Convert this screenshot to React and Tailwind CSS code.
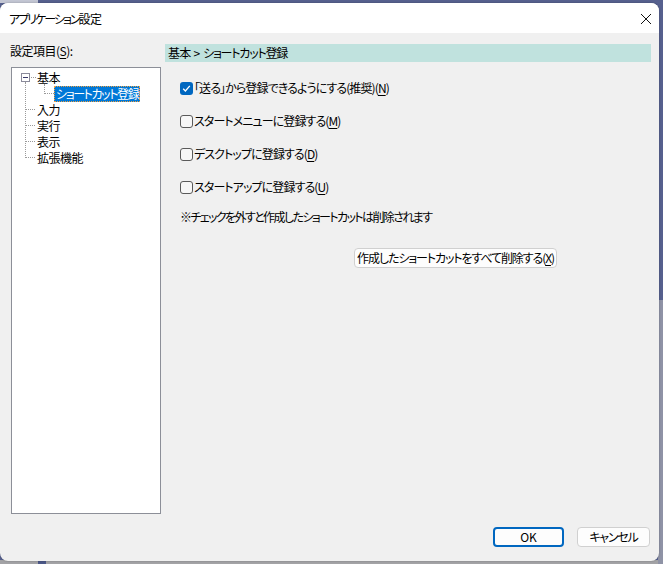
import React from "react";

function U({ children }) {
  return <span className="underline underline-offset-2">{children}</span>;
}

function Checkbox({ checked }) {
  if (checked) {
    return (
      <span className="w-[13px] h-[13px] rounded-[3px] bg-[#0067c0] flex items-center justify-center shrink-0">
        <svg width="9" height="9" viewBox="0 0 9 9">
          <path d="M1.2 4.8 L3.4 7 L7.8 1.8" fill="none" stroke="white" strokeWidth="1.3" />
        </svg>
      </span>
    );
  }
  return <span className="w-[13px] h-[13px] rounded-[3px] border border-[#5a5a5a] bg-[#f7f7f7] shrink-0" />;
}

function Row({ checked, children }) {
  return (
    <div className="flex items-center h-[16px] gap-[1px]">
      <Checkbox checked={checked} />
      <span className="leading-[16px] whitespace-nowrap tracking-[-0.9px]">{children}</span>
    </div>
  );
}

export default function App() {
  return (
    <div className="relative w-[663px] h-[564px] bg-[#56608e] overflow-hidden text-[12px] text-black font-['Noto_Sans_CJK_JP','Noto_Sans',sans-serif] [font-feature-settings:'palt'_1]">
      <div className="absolute left-0 top-0 w-[38px] h-[3px] bg-[#c3c6d3]" />
      <div className="absolute left-0 bottom-0 w-[663px] h-[4px] bg-[#a3a3a6]" />
      <div className="absolute left-[38px] bottom-0 w-[8px] h-[4px] bg-[#4b5787]" />
      <div className="absolute right-0 top-[300px] w-[5px] h-[264px] bg-[#8f93a6]" />

      <div className="relative mt-[3px] w-[659px] h-[558px] rounded-[8px] bg-[#f0f0f0] overflow-hidden flex flex-col shadow-[0_0_2px_rgba(0,0,0,0.3)]">
        {/* title bar */}
        <div className="h-[30px] bg-white flex items-center justify-between pl-[9px] pr-[6px]">
          <span className="leading-[16px] pt-[1px] whitespace-nowrap">
            <span className="tracking-[-2px]">アプリケーション</span>
            <span className="tracking-[-0.5px]">設定</span>
          </span>
          <svg width="12" height="12" viewBox="0 0 12 12" className="mr-[1px] mt-[1px]">
            <path d="M1 1 L11 11 M11 1 L1 11" stroke="#111" strokeWidth="1" />
          </svg>
        </div>

        {/* body */}
        <div className="flex flex-1">
          {/* left column */}
          <div className="flex flex-col pt-[10px]">
            <div className="pl-[10px] leading-[16px] h-[16px] tracking-[-0.5px]">
              設定項目(<U>S</U>):
            </div>
            <div className="ml-[11px] mt-[8px] w-[150px] h-[447px] bg-white border border-[#8c8f98] relative">
              {/* tree lines */}
              <div className="absolute left-[13px] top-[14px] h-[76px] border-l border-dotted border-[#9a9a9a]" />
              <div className="absolute left-[13px] top-[41px] w-[10px] border-t border-dotted border-[#9a9a9a]" />
              <div className="absolute left-[13px] top-[57px] w-[10px] border-t border-dotted border-[#9a9a9a]" />
              <div className="absolute left-[13px] top-[73px] w-[10px] border-t border-dotted border-[#9a9a9a]" />
              <div className="absolute left-[13px] top-[89px] w-[10px] border-t border-dotted border-[#9a9a9a]" />
              <div className="absolute left-[19px] top-[9px] w-[5px] border-t border-dotted border-[#9a9a9a]" />
              <div className="absolute left-[32px] top-[16px] h-[10px] border-l border-dotted border-[#9a9a9a]" />
              <div className="absolute left-[32px] top-[25px] w-[10px] border-t border-dotted border-[#9a9a9a]" />
              <div className="absolute left-[9px] top-[5px] w-[9px] h-[9px] border border-[#8a8a9a] bg-white flex items-center justify-center">
                <span className="w-[5px] h-[1px] bg-[#3a3a6a]" />
              </div>
              <div className="flex flex-col pt-[2px] tracking-[-0.5px]">
                <div className="h-[16px] leading-[16px] pl-[25px]">基本</div>
                <div className="h-[16px] flex pl-[42px]">
                  <span className="h-[16px] leading-[14px] px-[1px] bg-[#0078d7] text-white border border-dotted border-[#f0a040] whitespace-nowrap tracking-[-1.4px]">
                    ショートカット登録
                  </span>
                </div>
                <div className="h-[16px] leading-[16px] pl-[25px]">入力</div>
                <div className="h-[16px] leading-[16px] pl-[25px]">実行</div>
                <div className="h-[16px] leading-[16px] pl-[25px]">表示</div>
                <div className="h-[16px] leading-[16px] pl-[25px]">拡張機能</div>
              </div>
            </div>
          </div>

          {/* right column */}
          <div className="ml-[4px] pt-[11px] flex flex-col w-[486px]">
            <div className="h-[18px] bg-[#c0e2de] pl-[3px] leading-[18px] whitespace-nowrap tracking-[-0.8px] flex">
              <span>基本</span>
              <span className="tracking-normal px-[3px]">&gt;</span>
              <span className="tracking-[-1.2px]">ショートカット登録</span>
            </div>
            <div className="pl-[15px] mt-[18px] flex flex-col gap-[17px]">
              <Row checked>「送る」から登録できるようにする(推奨)(<U>N</U>)</Row>
              <Row>スタートメニューに登録する(<U>M</U>)</Row>
              <Row>デスクトップに登録する(<U>D</U>)</Row>
              <Row>スタートアップに登録する(<U>U</U>)</Row>
            </div>
            <div className="pl-[15px] mt-[14px] h-[16px] leading-[16px] whitespace-nowrap tracking-[-1.6px]">
              ※チェックを外すと作成したショートカットは削除されます
            </div>
            <div className="ml-[189px] mt-[23px] w-[203px] h-[20px] rounded-[4px] border border-[#d0d0d0] bg-[#fdfdfd] flex items-center justify-center leading-[16px] whitespace-nowrap tracking-[-1.1px]">
              作成したショートカットをすべて削除する(<U>X</U>)
            </div>
          </div>
        </div>

        {/* footer */}
        <div className="h-[34px] flex items-start justify-end gap-[13px] pr-[9px]">
          <div className="w-[71px] h-[20px] rounded-[4px] border-2 border-[#0067c0] bg-[#fdfdfd] flex items-center justify-center leading-[16px]">
            OK
          </div>
          <div className="w-[73px] h-[20px] rounded-[4px] border border-[#d0d0d0] bg-[#fdfdfd] flex items-center justify-center leading-[16px] tracking-[-1.2px]">
            キャンセル
          </div>
        </div>
      </div>
    </div>
  );
}
